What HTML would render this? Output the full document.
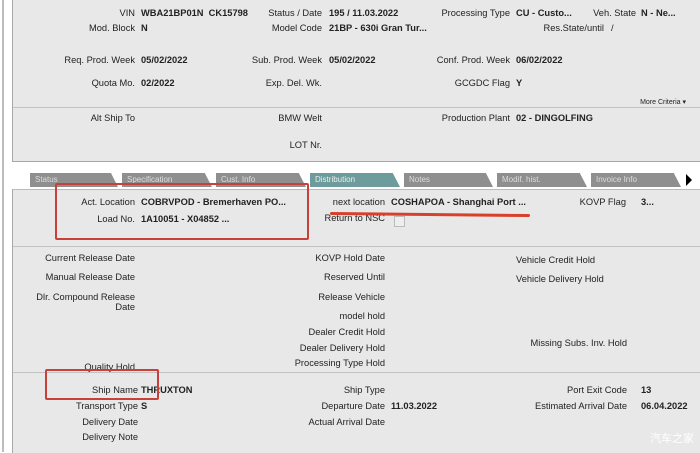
<!DOCTYPE html>
<html><head><meta charset="utf-8"><style>
body{margin:0;width:700px;height:452px;background:#fff;position:relative;overflow:hidden;font-family:"Liberation Sans",Arial,sans-serif;font-size:9.3px;color:#222}
.p{position:absolute;background:#e8e8e8;border-left:1px solid #a8a8a8}
.l,.v{position:absolute;white-space:nowrap;line-height:11px}
.v{font-weight:bold}
.hr{position:absolute;left:13px;right:0;height:1px;background:#c2c2c2}
.tab{position:absolute;top:173px;height:14px;background:#8f8f8f;color:#ddd;font-size:8px;line-height:14px;padding-left:5px;box-sizing:border-box;clip-path:polygon(0 0,92% 0,100% 100%,0 100%)}
.red{position:absolute;border:2px solid #c8403c;border-radius:2px}
</style></head><body>
<div style="position:absolute;left:2px;top:0;width:2px;height:452px;background:#bdbdbd"></div>
<div class="p" style="left:12px;top:0;width:688px;height:161px;border-bottom:1px solid #a8a8a8"></div>
<div class="hr" style="top:107px"></div>
<div class="p" style="left:12px;top:189px;width:688px;height:263px;border-top:1px solid #bbb"></div>
<div class="hr" style="top:246px"></div>
<div class="hr" style="top:372px"></div>

<span class="l" style="right:565px;top:8px">VIN</span><span class="v" style="left:141px;top:8px">WBA21BP01N&nbsp;&nbsp;CK15798</span>
<span class="l" style="right:378px;top:8px">Status / Date</span><span class="v" style="left:329px;top:8px">195 / 11.03.2022</span>
<span class="l" style="right:190px;top:8px">Processing Type</span><span class="v" style="left:516px;top:8px">CU - Custo...</span>
<span class="l" style="right:64px;top:8px">Veh. State</span><span class="v" style="left:641px;top:8px">N - Ne...</span>
<span class="l" style="right:565px;top:23px">Mod. Block</span><span class="v" style="left:141px;top:23px">N</span>
<span class="l" style="right:378px;top:23px">Model Code</span><span class="v" style="left:329px;top:23px">21BP - 630i Gran Tur...</span>
<span class="l" style="right:96px;top:23px">Res.State/until</span><span class="l" style="left:611px;top:23px">/</span>
<span class="l" style="right:565px;top:55px">Req. Prod. Week</span><span class="v" style="left:141px;top:55px">05/02/2022</span>
<span class="l" style="right:378px;top:55px">Sub. Prod. Week</span><span class="v" style="left:329px;top:55px">05/02/2022</span>
<span class="l" style="right:190px;top:55px">Conf. Prod. Week</span><span class="v" style="left:516px;top:55px">06/02/2022</span>
<span class="l" style="right:565px;top:78px">Quota Mo.</span><span class="v" style="left:141px;top:78px">02/2022</span>
<span class="l" style="right:378px;top:78px">Exp. Del. Wk.</span>
<span class="l" style="right:190px;top:78px">GCGDC Flag</span><span class="v" style="left:516px;top:78px">Y</span>
<span class="l" style="right:14px;top:97px;font-size:7px">More Criteria ▾</span>
<span class="l" style="right:565px;top:113px">Alt Ship To</span>
<span class="l" style="right:378px;top:113px">BMW Welt</span>
<span class="l" style="right:190px;top:113px">Production Plant</span><span class="v" style="left:516px;top:113px">02 - DINGOLFING</span>
<span class="l" style="right:378px;top:140px">LOT Nr.</span>

<div class="tab" style="left:30px;width:88px">Status</div>
<div class="tab" style="left:122px;width:90px">Specification</div>
<div class="tab" style="left:216px;width:90px">Cust. Info</div>
<div class="tab" style="left:310px;width:90px;background:#6e9c9c;color:#eee">Distribution</div>
<div class="tab" style="left:404px;width:89px">Notes</div>
<div class="tab" style="left:497px;width:90px">Modif. hist.</div>
<div class="tab" style="left:591px;width:90px">Invoice Info</div>
<div style="position:absolute;left:686px;top:174px;width:0;height:0;border-left:6px solid #000;border-top:6px solid transparent;border-bottom:6px solid transparent"></div>

<span class="l" style="right:565px;top:197px">Act. Location</span><span class="v" style="left:141px;top:197px">COBRVPOD - Bremerhaven PO...</span>
<span class="l" style="right:565px;top:214px">Load No.</span><span class="v" style="left:141px;top:214px">1A10051 - X04852 ...</span>
<span class="l" style="right:315px;top:197px">next location</span><span class="v" style="left:391px;top:197px">COSHAPOA - Shanghai Port ...</span>
<span class="l" style="right:315px;top:213px">Return to NSC</span>
<div style="position:absolute;left:394px;top:216px;width:9px;height:9px;border:1px solid #bbb;background:#eee"></div>
<span class="l" style="right:74px;top:197px">KOVP Flag</span><span class="v" style="left:641px;top:197px">3...</span>

<span class="l" style="right:565px;top:253px">Current Release Date</span>
<span class="l" style="right:565px;top:272px">Manual Release Date</span>
<span class="l" style="right:565px;top:292px;text-align:right;line-height:10px">Dlr. Compound Release<br>Date</span>
<span class="l" style="right:565px;top:362px">Quality Hold</span>
<span class="l" style="right:315px;top:253px">KOVP Hold Date</span>
<span class="l" style="right:315px;top:272px">Reserved Until</span>
<span class="l" style="right:315px;top:292px">Release Vehicle</span>
<span class="l" style="right:315px;top:311px">model hold</span>
<span class="l" style="right:315px;top:327px">Dealer Credit Hold</span>
<span class="l" style="right:315px;top:343px">Dealer Delivery Hold</span>
<span class="l" style="right:315px;top:358px">Processing Type Hold</span>
<span class="l" style="left:516px;top:255px">Vehicle Credit Hold</span>
<span class="l" style="left:516px;top:274px">Vehicle Delivery Hold</span>
<span class="l" style="right:73px;top:338px">Missing Subs. Inv. Hold</span>

<span class="l" style="right:562px;top:385px">Ship Name</span><span class="v" style="left:141px;top:385px">THRUXTON</span>
<span class="l" style="right:562px;top:401px">Transport Type</span><span class="v" style="left:141px;top:401px">S</span>
<span class="l" style="right:562px;top:417px">Delivery Date</span>
<span class="l" style="right:562px;top:432px">Delivery Note</span>
<span class="l" style="right:315px;top:385px">Ship Type</span>
<span class="l" style="right:315px;top:401px">Departure Date</span><span class="v" style="left:391px;top:401px">11.03.2022</span>
<span class="l" style="right:315px;top:417px">Actual Arrival Date</span>
<span class="l" style="right:73px;top:385px">Port Exit Code</span><span class="v" style="left:641px;top:385px">13</span>
<span class="l" style="right:73px;top:401px">Estimated Arrival Date</span><span class="v" style="left:641px;top:401px">06.04.2022</span>

<div class="red" style="left:55px;top:183px;width:250px;height:53px"></div>
<div style="position:absolute;left:330px;top:213px;width:200px;height:3px;background:#d8402c;border-radius:2px;transform:rotate(0.6deg)"></div>
<div class="red" style="left:45px;top:369px;width:110px;height:27px"></div>
<span class="l" style="left:650px;top:434px;color:#fff;font-family:'Liberation Sans','Noto Sans CJK SC',sans-serif;font-size:11px">汽车之家</span>
</body></html>
